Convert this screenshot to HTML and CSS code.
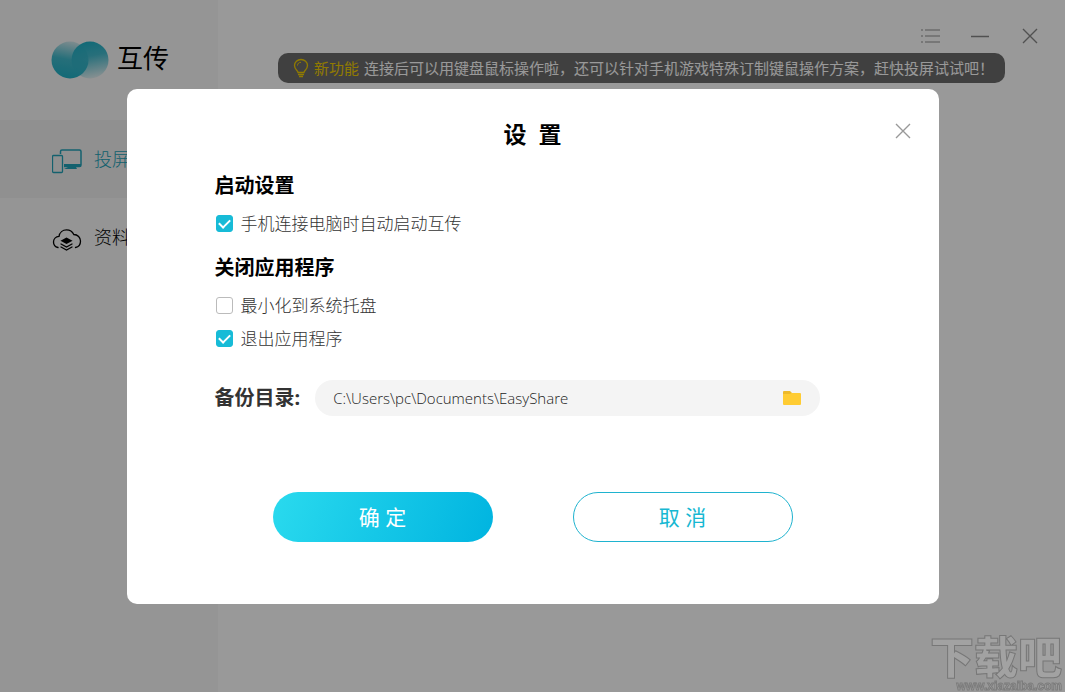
FILE: index.html
```html
<!DOCTYPE html>
<html lang="zh-CN">
<head>
    <meta charset="UTF-8">
    <meta name="viewport" content="width=device-width, initial-scale=1.0">
    <title>互传</title>
    <link rel="stylesheet" href="styles.css">
</head>
<body>
    <div class="app">
        <aside class="sidebar">
            <div class="logo">
                <svg width="58" height="40" viewBox="0 0 58 40">
                    <defs>
                        <linearGradient id="logo-left" x1="0.4" y1="1" x2="0.6" y2="0">
                            <stop offset="0" stop-color="#1fb0c6"/>
                            <stop offset="0.5" stop-color="#40b9cb"/>
                            <stop offset="1" stop-color="#d4eaee"/>
                        </linearGradient>
                        <linearGradient id="logo-right" x1="0.4" y1="0" x2="0.6" y2="1">
                            <stop offset="0" stop-color="#1fb0c6"/>
                            <stop offset="0.4" stop-color="#2fb3c8" stop-opacity="0.9"/>
                            <stop offset="1" stop-color="#2fb3c8" stop-opacity="0.1"/>
                        </linearGradient>
                    </defs>
                    <circle cx="19" cy="20" r="18.5" fill="url(#logo-left)"/>
                    <circle cx="39" cy="20" r="18.5" fill="url(#logo-right)"/>
                </svg>
                <span class="logo-name">互传</span>
            </div>
            <nav>
                <a href="#" class="nav-item active">
                    <svg width="30" height="26" viewBox="0 0 30 26" fill="none" stroke="currentColor">
                        <path d="M8.5 6V3.5a1.5 1.5 0 0 1 1.5-1.5H27.5a1.5 1.5 0 0 1 1.5 1.5V17a1.5 1.5 0 0 1-1.5 1.5H12" stroke-width="1.5"/>
                        <path d="M12 16h17v2a1 1 0 0 1-1 1H12zM16 19h8l1 2H12z" fill="currentColor" stroke="none"/>
                        <rect x="0.5" y="7.5" width="10" height="17" rx="1" stroke-width="1.3"/>
                    </svg>
                    <span>投屏</span>
                </a>
                <a href="#" class="nav-item">
                    <svg width="30" height="26" viewBox="0 0 30 26" fill="none" stroke="currentColor" stroke-width="1.3" stroke-linecap="round">
                        <path d="M6 21.5C3.5 21 1.5 18.8 1.5 16C1.5 13 3.8 10.5 7 10.3C7.6 6.5 10.7 3.8 14.5 3.8C17.8 3.8 20.5 5.7 21.8 8.5C25.7 8.5 28.5 11.5 28.5 15C28.5 18.3 26.5 21 23.5 21.5"/>
                        <path d="M14.5 11.5l6 3.3-6 3.3-6-3.3z" fill="currentColor" stroke="none"/>
                        <path d="M9 18l5.5 3 5.5-3M9 21l5.5 3 5.5-3"/>
                    </svg>
                    <span>资料</span>
                </a>
            </nav>
        </aside>

        <main class="content">
            <div class="window-controls">
                <button type="button" class="control-light" aria-label="菜单">
                    <svg width="20" height="20" viewBox="0 0 20 20" stroke="currentColor" stroke-width="1.5">
                        <path d="M1 4h2M5 4h15M1 10h2M5 10h15M1 16h2M5 16h15"/>
                    </svg>
                </button>
                <button type="button" aria-label="最小化">
                    <svg width="20" height="20" viewBox="0 0 20 20" stroke="currentColor" stroke-width="1.5">
                        <path d="M1 10.5h18"/>
                    </svg>
                </button>
                <button type="button" aria-label="关闭窗口">
                    <svg width="20" height="20" viewBox="0 0 20 20" stroke="currentColor" stroke-width="1.4">
                        <path d="M3 3l14 14M17 3L3 17"/>
                    </svg>
                </button>
            </div>
            <div class="notice">
                <svg width="16" height="20" viewBox="0 0 16 20" fill="none" stroke="currentColor" stroke-width="1.3">
                    <path d="M5 14.5C5 12.5 1.5 11.5 1.5 7.5C1.5 4 4.4 1.5 8 1.5S14.5 4 14.5 7.5C14.5 11.5 11 12.5 11 14.5z"/>
                    <path d="M4.5 7.5C4.5 5.5 6 4.3 8 4.3" stroke-width="1"/>
                    <path d="M5 16.5h6M6 18.5h4"/>
                </svg>
                <strong>新功能</strong>
                <span>连接后可以用键盘鼠标操作啦，还可以针对手机游戏特殊订制键鼠操作方案，赶快投屏试试吧！</span>
            </div>
        </main>
    </div>

    <!-- Settings dialog -->
    <div class="overlay">
        <form class="modal" role="dialog" aria-labelledby="modal-title">
            <button type="button" class="modal-close" aria-label="关闭">
                <svg width="16" height="16" viewBox="0 0 16 16" stroke="currentColor" stroke-width="1.4">
                    <path d="M1 1l14 14M15 1L1 15"/>
                </svg>
            </button>
            <h1 id="modal-title">设&nbsp;&nbsp;置</h1>

            <section class="group">
                <h2>启动设置</h2>
                <label class="option"><input type="checkbox" checked>手机连接电脑时自动启动互传</label>
            </section>
            <section class="group">
                <h2>关闭应用程序</h2>
                <label class="option"><input type="checkbox">最小化到系统托盘</label>
                <label class="option"><input type="checkbox" checked>退出应用程序</label>
            </section>

            <div class="backup">
                <label for="backup-path">备份目录:</label>
                <div class="path-box">
                    <input type="text" id="backup-path" value="C:\Users\pc\Documents\EasyShare">
                    <button type="button" aria-label="选择目录">
                        <svg width="18" height="16" viewBox="0 0 18 16">
                            <path d="M0 2a1 1 0 0 1 1-1h6l2 2v4H0z" fill="#edb92b"/>
                            <path d="M0 4h7l1.5-1H17a1 1 0 0 1 1 1v10a1 1 0 0 1-1 1H1a1 1 0 0 1-1-1z" fill="#ffcc33"/>
                        </svg>
                    </button>
                </div>
            </div>

            <div class="actions">
                <button type="button" class="btn btn-primary">确 定</button>
                <button type="button" class="btn btn-outline">取 消</button>
            </div>
        </form>
    </div>

    <div class="watermark">
        <span class="watermark-name">下载吧</span>
        <span class="watermark-url">www.xiazaiba.com</span>
    </div>
</body>
</html>
```
FILE: styles.css
```css
* {
    margin: 0;
    padding: 0;
    box-sizing: border-box;
}

body {
    font-family: "Noto Sans", "Noto Sans CJK SC", sans-serif;
    color: #000;
    background-color: #fff;
    overflow: hidden;
}

button,
input {
    font-family: inherit;
    border: none;
    background: none;
}

button {
    cursor: pointer;
}

svg {
    display: block;
    flex-shrink: 0;
}

.app {
    display: flex;
    min-height: 100vh;
}

/* Sidebar */
.sidebar {
    flex: 0 0 218px;
    background-color: #f8f8f8;
}

.logo {
    display: flex;
    align-items: center;
    gap: 8px;
    height: 120px;
    padding-left: 51px;
}

.logo-name {
    font-size: 26px;
    line-height: 32px;
    padding-bottom: 4px;
}

.nav-item {
    display: flex;
    align-items: center;
    gap: 12px;
    height: 78px;
    padding-left: 52px;
    font-size: 18px;
    font-weight: 300;
    line-height: 24px;
    color: #000;
    text-decoration: none;
}

.nav-item svg {
    margin-top: 4px;
}

.nav-item.active {
    background-color: #f0f0f0;
    color: #22a2b8;
}

/* Main area */
.content {
    flex: 1;
    display: flex;
    flex-direction: column;
    align-items: center;
    padding-top: 26px;
}

.window-controls {
    display: flex;
    align-self: flex-end;
    gap: 30px;
    height: 27px;
    padding-right: 25px;
    color: #888;
}

.window-controls button {
    height: 20px;
    color: inherit;
}

.window-controls .control-light {
    color: #b4b4b4;
}

.notice {
    display: flex;
    align-items: center;
    gap: 5px;
    height: 30px;
    padding: 0 11px 0 15px;
    border-radius: 10px;
    background-color: #6c6c6c;
    color: #fff;
    font-size: 15px;
    line-height: 20px;
    white-space: nowrap;
}

.notice svg,
.notice strong {
    color: #f0cc00;
    font-weight: normal;
}

/* Dialog */
.overlay {
    position: fixed;
    inset: 0;
    display: flex;
    align-items: center;
    justify-content: center;
    background-color: rgba(0, 0, 0, 0.4);
}

.modal {
    position: relative;
    width: 90%;
    max-width: 812px;
    padding: 30px 119px 62px 88px;
    border-radius: 10px;
    background-color: #fff;
}

.modal-close {
    position: absolute;
    top: 34px;
    right: 28px;
    color: #999;
}

.modal h1 {
    margin: 0 -119px 22px -88px;
    font-size: 23px;
    line-height: 30px;
    text-align: center;
}

.group {
    margin-bottom: 17px;
}

.group h2 {
    margin-bottom: 11px;
    font-size: 20px;
    line-height: 30px;
}

.option {
    display: flex;
    align-items: center;
    gap: 8px;
    padding-left: 1px;
    font-size: 17px;
    font-weight: 300;
    line-height: 24px;
    color: #333;
}

.option + .option {
    margin-top: 9px;
}

.option input {
    appearance: none;
    display: grid;
    place-items: center;
    width: 17px;
    height: 17px;
    border: 1px solid #bbb;
    border-radius: 3px;
}

.option input:checked {
    border-color: #17bbd7;
    background-color: #17bbd7;
}

.option input:checked::after {
    content: "";
    width: 9px;
    height: 5px;
    margin-bottom: 3px;
    border-left: 2px solid #fff;
    border-bottom: 2px solid #fff;
    transform: rotate(-45deg);
}

.backup {
    display: flex;
    align-items: center;
    gap: 15px;
    margin-top: 29px;
}

.backup label {
    font-size: 20px;
    font-weight: bold;
    line-height: 30px;
    color: #333;
}

.path-box {
    flex: 1;
    display: flex;
    align-items: center;
    height: 36px;
    padding: 0 19px 0 18px;
    border-radius: 18px;
    background-color: #f4f4f4;
}

.path-box input {
    flex: 1;
    min-width: 0;
    font-family: "Open Sans", sans-serif;
    font-size: 15px;
    font-weight: 300;
    line-height: 20px;
    color: #222;
}

.actions {
    display: flex;
    justify-content: center;
    gap: 80px;
    margin: 76px -119px 0 -88px;
}

.btn {
    width: 220px;
    height: 50px;
    border-radius: 25px;
    font-size: 21px;
    line-height: 30px;
}

.btn-primary {
    background-image: linear-gradient(110deg, #2adaee, #00b4e0);
    color: #fff;
}

.btn-outline {
    border: 1px solid #1fb3cf;
    color: #17b8d2;
}

/* Watermark in the corner */
.watermark {
    position: fixed;
    right: 3px;
    bottom: 0;
    display: flex;
    flex-direction: column;
    align-items: flex-end;
    color: #a2a2a2;
}

.watermark-name {
    font-size: 44px;
    font-weight: 900;
    line-height: 46px;
    -webkit-text-stroke: 1px #777;
}

.watermark-url {
    font-family: "Liberation Sans", sans-serif;
    font-size: 12px;
    font-weight: bold;
    line-height: 12px;
    -webkit-text-stroke: 1px #7c7c7c;
}
```
